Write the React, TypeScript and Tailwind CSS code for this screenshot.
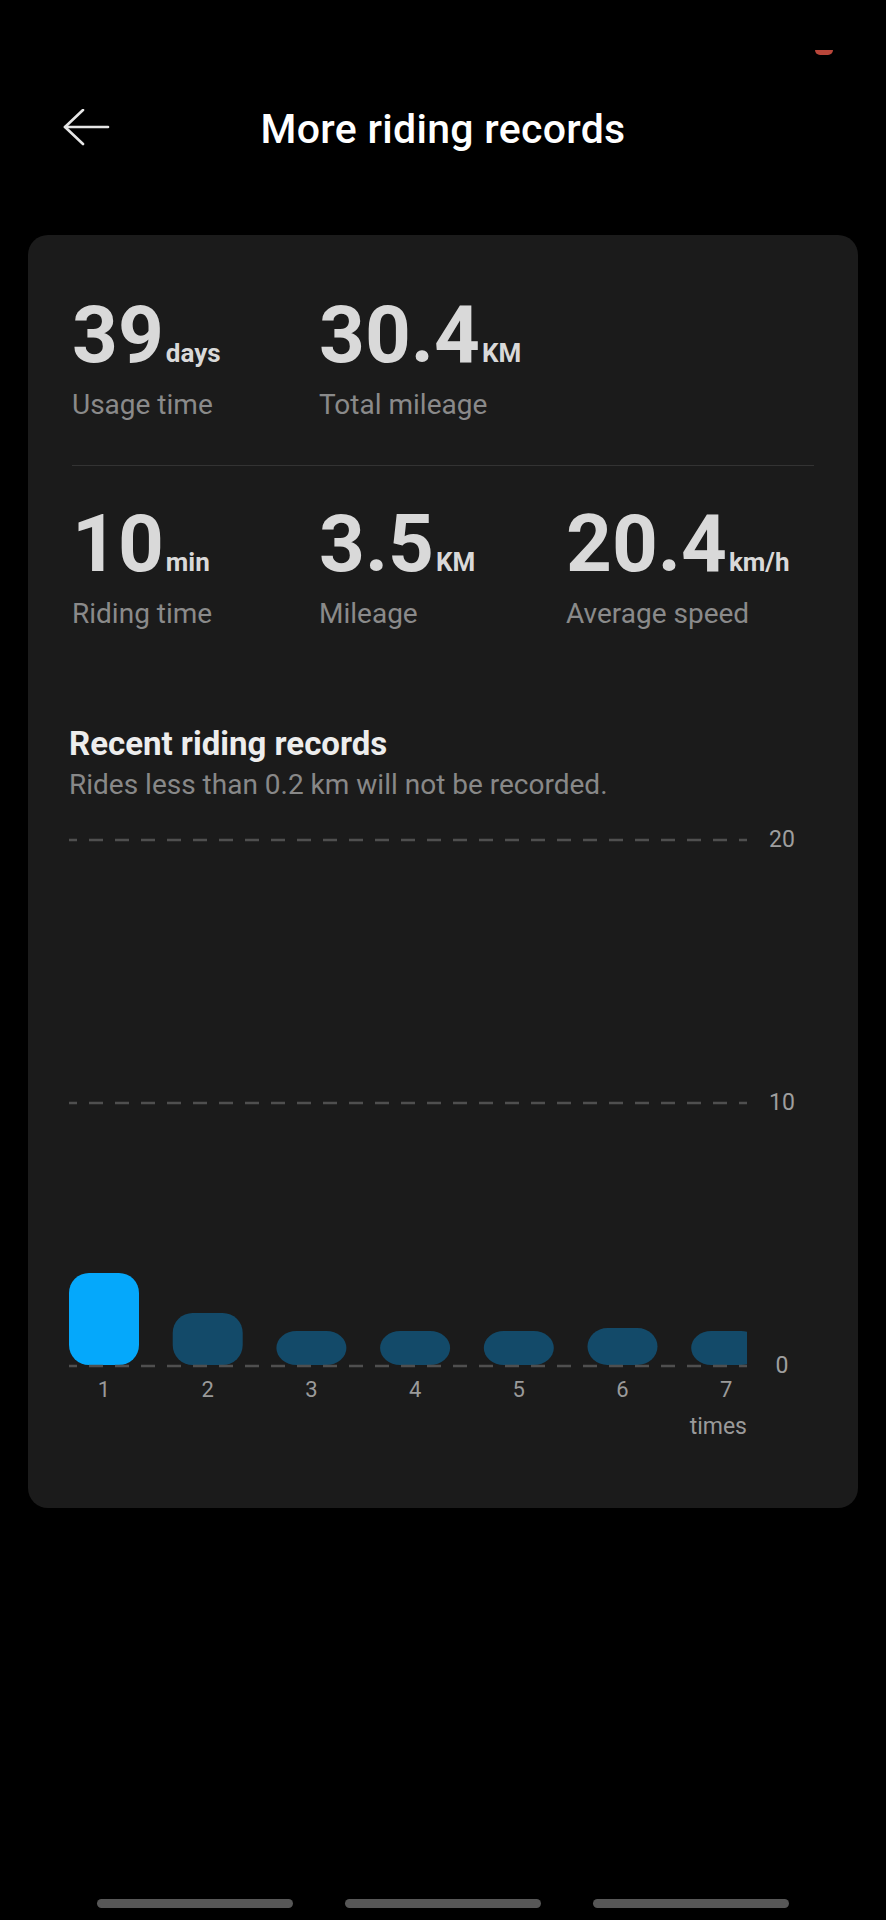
import React from "react";

type StatProps = { value: string; unit: string; label: string };

function Stat({ value, unit, label }: StatProps) {
  return (
    <div>
      <div className="flex items-baseline h-[80px]">
        <span className="text-[80px] leading-[80px] font-bold text-[#d9d9d9]">{value}</span>
        <span className="text-[26px] leading-none font-bold text-[#d9d9d9] ml-[2px]">{unit}</span>
      </div>
      <div className="mt-[14px] text-[28px] leading-[32px] text-[#8a8a8a]">{label}</div>
    </div>
  );
}

const bars = [
  { h: 92, c: "#05a8fb" },
  { h: 52, c: "#134a69" },
  { h: 34, c: "#134a69" },
  { h: 34, c: "#134a69" },
  { h: 34, c: "#134a69" },
  { h: 37, c: "#134a69" },
  { h: 34, c: "#134a69" },
];

function Chart() {
  const W = 678;
  const H = 535;
  const lines = [5, 268, 531];
  return (
    <div className="flex items-start mt-[24px]">
      <div className="w-[678px] shrink-0">
        <svg width={W} height={H} viewBox={`0 0 ${W} ${H}`} className="block mt-[9px]">
          {bars.map((b, i) => (
            <rect
              key={i}
              x={i * 103.7}
              y={530 - b.h}
              width={70}
              height={b.h}
              rx={20}
              ry={Math.min(20, b.h / 2)}
              fill={b.c}
            />
          ))}
          {lines.map((y) => (
            <line
              key={y}
              x1={0}
              x2={W}
              y1={y}
              y2={y}
              stroke="#4f4f4f"
              strokeWidth={2.5}
              strokeDasharray="14 12"
              strokeDashoffset={6}
            />
          ))}
        </svg>
        <div className="flex gap-[33.7px] mt-[7px]">
          {[1, 2, 3, 4, 5, 6, 7].map((n) => (
            <div key={n} className="w-[70px] shrink-0 text-center text-[22px] leading-[26px] text-[#9a9a9a]">
              {n}
            </div>
          ))}
        </div>
        <div className="mt-[10px] text-right text-[23px] leading-[28px] text-[#9a9a9a]">times</div>
      </div>
      <div className="w-[70px] h-[554px] flex flex-col justify-between items-center text-[23px] leading-[28px] text-[#9e9e9e]">
        <div>20</div>
        <div>10</div>
        <div>0</div>
      </div>
    </div>
  );
}

export default function App() {
  return (
    <div className="w-[886px] h-[1920px] bg-black flex flex-col font-['Roboto','Noto_Sans',sans-serif]">
      <div className="pt-[50px] pr-[53px] flex justify-end">
        <div className="w-[18px] h-[5px] rounded-b-full bg-[#b9463a]" />
      </div>
      <header className="mt-[51px] h-[46px] px-[60px] grid grid-cols-[1fr_auto_1fr] items-center">
        <div className="flex items-center">
          <svg width="48" height="40" viewBox="0 0 48 40" fill="none" className="ml-[2px]">
            <path d="M3 18H46" stroke="#e6e6e6" strokeWidth="2.6" strokeLinecap="round" />
            <path d="M21 1L3 18L21 35" stroke="#e6e6e6" strokeWidth="2.6" strokeLinecap="round" strokeLinejoin="round" />
          </svg>
        </div>
        <h1 className="text-[41px] leading-[46px] font-medium tracking-[0.3px] text-white">More riding records</h1>
        <div />
      </header>

      <main className="mt-[83px] mx-[28px] rounded-[20px] bg-[#1b1b1b] pb-[67px]">
        <section className="pt-[60px] px-[44px]">
          <div className="grid grid-cols-[247px_247px_247px]">
            <Stat value="39" unit="days" label="Usage time" />
            <Stat value="30.4" unit="KM" label="Total mileage" />
          </div>
          <div className="mt-[44px] h-px bg-[#333333]" />
          <div className="mt-[38px] grid grid-cols-[247px_247px_247px]">
            <Stat value="10" unit="min" label="Riding time" />
            <Stat value="3.5" unit="KM" label="Mileage" />
            <Stat value="20.4" unit="km/h" label="Average speed" />
          </div>
        </section>

        <section className="mt-[94px] pl-[41px]">
          <h2 className="text-[33px] leading-[40px] font-bold text-[#ededed]">Recent riding records</h2>
          <p className="mt-[4px] text-[28px] leading-[34px] text-[#888888]">
            Rides less than 0.2 km will not be recorded.
          </p>
          <Chart />
        </section>
      </main>

      <div className="mt-auto pb-[12px] flex justify-center gap-[52px]">
        <div className="w-[196px] h-[9px] rounded-full bg-[#575757]" />
        <div className="w-[196px] h-[9px] rounded-full bg-[#575757]" />
        <div className="w-[196px] h-[9px] rounded-full bg-[#575757]" />
      </div>
    </div>
  );
}
